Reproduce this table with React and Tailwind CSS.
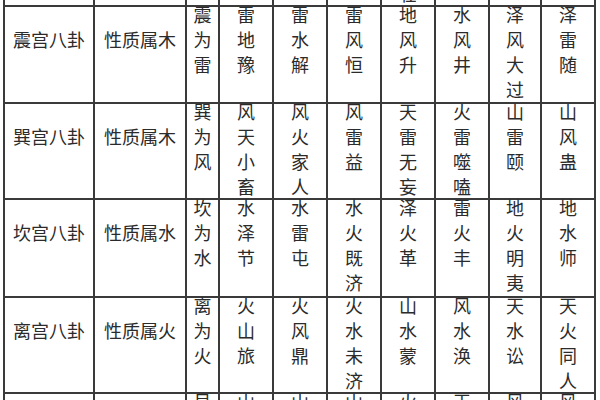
import React from 'react';

// 八宫卦表（截取部分）
const rows = [
  { gong: '坤宫八卦', xing: '性质属土', gua: ['坤为地', '地雷复', '地泽临', '地天泰', '雷天大壮', '泽天夬', '水天需', '水地比'], h: 'h-[96px]' },
  { gong: '震宫八卦', xing: '性质属木', gua: ['震为雷', '雷地豫', '雷水解', '雷风恒', '地风升', '水风井', '泽风大过', '泽雷随'], h: 'h-[97px]' },
  { gong: '巽宫八卦', xing: '性质属木', gua: ['巽为风', '风天小畜', '风火家人', '风雷益', '天雷无妄', '火雷噬嗑', '山雷颐', '山风蛊'], h: 'h-[96px]' },
  { gong: '坎宫八卦', xing: '性质属水', gua: ['坎为水', '水泽节', '水雷屯', '水火既济', '泽火革', '雷火丰', '地火明夷', '地水师'], h: 'h-[98px]' },
  { gong: '离宫八卦', xing: '性质属火', gua: ['离为火', '火山旅', '火风鼎', '火水未济', '山水蒙', '风水涣', '天水讼', '天火同人'], h: 'h-[96px]' },
  { gong: '艮宫八卦', xing: '性质属土', gua: ['艮为山', '山火贲', '山天大畜', '山泽损', '火泽睽', '天泽履', '风泽中孚', '风山渐'], h: 'h-[96px]' },
];

const cell = 'border-r-2 border-[#3a3a3a]';

const App = () => {
  return (
    <div className="w-[600px] h-[400px] overflow-hidden bg-white text-[#2b2b2b] text-[18px] leading-[25px] [font-family:'Noto_Sans_CJK_SC','Noto_Sans',sans-serif]">
      <div className="-mt-[91px] ml-[3px] w-[593px] border-t-2 border-l-2 border-[#3a3a3a]">
        {rows.map((r) => (
          <div
            key={r.gong}
            className={`grid grid-cols-[90px_92px_33px_54px_54px_54px_54px_54px_52px_54px] border-b-2 border-[#3a3a3a] ${r.h}`}
          >
            <div className={`${cell} pt-[20px] text-center`}>{r.gong}</div>
            <div className={`${cell} pt-[20px] text-center`}>{r.xing}</div>
            {r.gua.map((g, i) => (
              <div key={i} className={cell}>
                {/* 竖排卦名 */}
                <div className="flex flex-col items-center -mt-[5px]">
                  {g.split('').map((ch, j) => (
                    <span key={j}>{ch}</span>
                  ))}
                </div>
              </div>
            ))}
          </div>
        ))}
      </div>
    </div>
  );
};

export default App;
